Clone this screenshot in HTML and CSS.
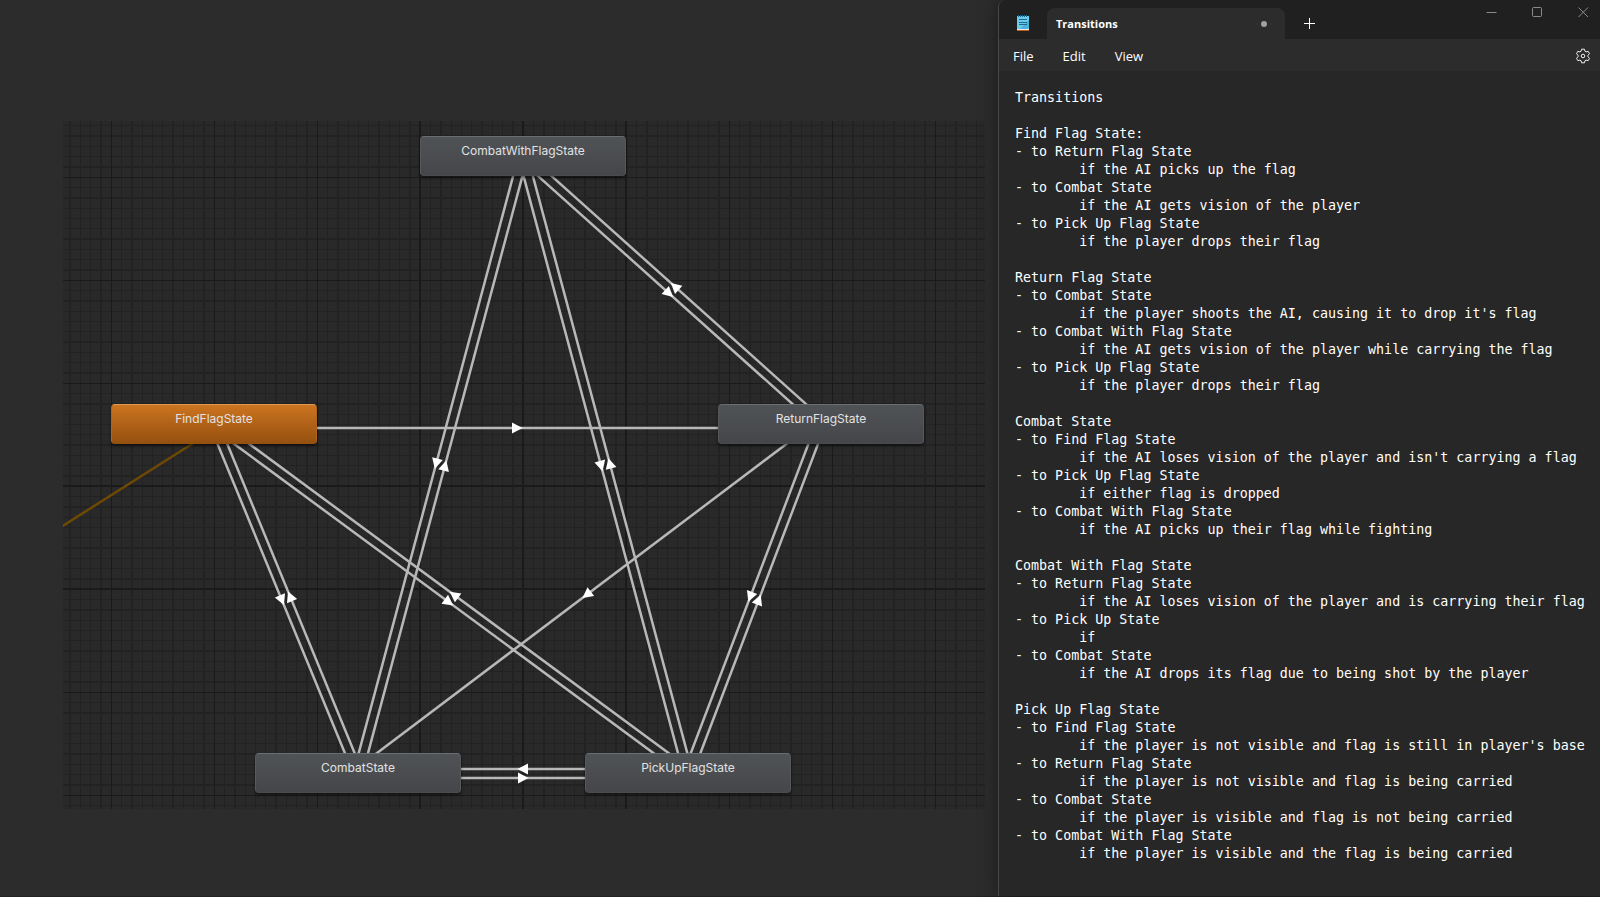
FILE: index.html
```html
<!DOCTYPE html>
<html lang="en">
<head>
<meta charset="utf-8">
<title>Transitions</title>
<link rel="stylesheet" href="styles.css">
</head>
<body>
<div class="desktop">
  <main class="workspace">
    <div class="canvas">
      <svg class="edges" aria-hidden="true">
        <defs>
          <pattern id="grid" x="48" y="56" width="103" height="103" patternUnits="userSpaceOnUse">
            <path class="grid-minor" d="M10 0h1v103h-1zM20 0h2v103h-2zM31 0h1v103h-1zM41 0h1v103h-1zM51 0h1v103h-1zM61 0h2v103h-2zM72 0h1v103h-1zM82 0h1v103h-1zM92 0h2v103h-2z"/>
            <path class="grid-minor" d="M0 10h103v1H0zM0 20h103v2H0zM0 31h103v1H0zM0 41h103v1H0zM0 51h103v1H0zM0 61h103v2H0zM0 72h103v1H0zM0 82h103v1H0zM0 92h103v2H0z"/>
            <path class="grid-major" d="M0 0h1v103H0zM0 0h103v1H0z"/>
          </pattern>
          <g id="ahead"><path d="M-5-5.500L5.500 0L-5 5.500z"/></g>
          <g id="back"><path d="M5-5.500L-5.500 0L5 5.500z"/></g>
        </defs>
        <rect width="100%" height="100%" fill="url(#grid)"/>
        <path class="grid-major" d="M356 0h2v688h-2zM459 0h2v688h-2zM562 0h2v688h-2zM0 364h922v2H0zM0 467h922v2H0z"/>
        <path class="entry" d="M-2 406L151 309"/>
        <!-- Each group runs along the line between two node centres. -->
        <g transform="translate(460 35.5) rotate(104.98)">
          <path class="edge" d="M0 4.5H638M0-4.5H638"/><use href="#ahead" x="319" y="4.5"/><use href="#back" x="319" y="-4.5"/>
        </g>
        <g transform="translate(460 35.5) rotate(75.02)">
          <path class="edge" d="M0 4.5H638M0-4.5H638"/><use href="#ahead" x="319" y="4.5"/><use href="#back" x="319" y="-4.5"/>
        </g>
        <g transform="translate(460 35.5) rotate(41.86)">
          <path class="edge" d="M0 4.5H400M0-4.5H400"/><use href="#ahead" x="200" y="4.5"/><use href="#back" x="200" y="-4.5"/>
        </g>
        <g transform="translate(151 302.5) rotate(67.61)">
          <path class="edge" d="M0 4.5H378M0-4.5H378"/><use href="#ahead" x="189" y="4.5"/><use href="#back" x="189" y="-4.5"/>
        </g>
        <g transform="translate(151 302.5) rotate(36.4)">
          <path class="edge" d="M0 4.5H589M0-4.5H589"/><use href="#ahead" x="295" y="4.5"/><use href="#back" x="295" y="-4.5"/>
        </g>
        <g transform="translate(151 302.5)">
          <path class="edge" d="M0 4.5H607"/><use href="#ahead" x="303" y="4.5"/>
        </g>
        <g transform="translate(758 302.5) rotate(142.95)">
          <path class="edge" d="M0 4.5H580"/><use href="#ahead" x="290" y="4.5"/>
        </g>
        <g transform="translate(758 302.5) rotate(110.83)">
          <path class="edge" d="M0 4.5H374M0-4.5H374"/><use href="#ahead" x="187" y="4.5"/><use href="#back" x="187" y="-4.5"/>
        </g>
        <g transform="translate(295 652.5)">
          <path class="edge" d="M0 4.5H330M0-4.5H330"/><use href="#ahead" x="165" y="4.5"/><use href="#back" x="165" y="-4.5"/>
        </g>
      </svg>
      <div class="node node-combat-flag">CombatWithFlagState</div>
      <div class="node node-find">FindFlagState</div>
      <div class="node node-return">ReturnFlagState</div>
      <div class="node node-combat">CombatState</div>
      <div class="node node-pickup">PickUpFlagState</div>
    </div>
  </main>

  <section class="notepad" aria-label="Notepad">
    <header class="titlebar">
      <svg class="app-icon" viewBox="0 0 14 17" aria-hidden="true">
        <path fill="#c2571a" d="M1 14h12v2H1z"/>
        <path fill="#e8eef0" d="M1 13h12v2H1z"/>
        <path fill="#6accea" d="M1 1h12v12l-1 1H1z"/>
        <path fill="#48b2d8" d="M13 5v8l-1 1H4z"/>
        <path fill="#1b6a92" d="M2 0h1v2H2zM4 0h1v2H4zM6 0h1v2H6zM8 0h1v2H8zM10 0h1v2h-1zM3 4h8v1H3zM3 7h8v1H3zM3 9h8v1H3z"/>
      </svg>
      <div class="tab">
        <span class="tab-title">Transitions</span>
        <span class="unsaved"></span>
      </div>
      <button class="new-tab" aria-label="New tab"><svg class="glyph" viewBox="0 0 11 11"><path d="M5.5 0v11M0 5.5h11"/></svg></button>
      <div class="caption-buttons">
        <button class="caption" aria-label="Minimize"><svg class="glyph" viewBox="0 0 11 11"><path d="M.5 5.5h10"/></svg></button>
        <button class="caption" aria-label="Maximize"><svg class="glyph" viewBox="0 0 11 11"><rect x=".5" y=".5" width="9" height="9" rx="1"/></svg></button>
        <button class="caption" aria-label="Close"><svg class="glyph" viewBox="0 0 11 11"><path d="M.5.5l9.500 9.500M10 .5L.5 10"/></svg></button>
      </div>
    </header>
    <nav class="menubar">
      <button class="menu">File</button>
      <button class="menu">Edit</button>
      <button class="menu">View</button>
      <button class="settings" aria-label="Settings">
        <svg class="gear" viewBox="0 0 16 16"><path d="M6.600 1.200h2.800l.5 2 1.200.7 2-.6 1.400 2.400-1.500 1.500v1.600l1.500 1.500-1.400 2.400-2-.6-1.200.7-.5 2H6.600l-.5-2-1.200-.7-2 .6-1.400-2.400L3 8.800V7.200L1.500 5.700l1.400-2.400 2 .6 1.200-.7z"/><circle cx="8" cy="8" r="1.800"/></svg>
      </button>
    </nav>
    <textarea class="editor" aria-label="Text editor" spellcheck="false">
Transitions

Find Flag State:
- to Return Flag State
	if the AI picks up the flag
- to Combat State
	if the AI gets vision of the player
- to Pick Up Flag State
	if the player drops their flag

Return Flag State
- to Combat State
	if the player shoots the AI, causing it to drop it's flag
- to Combat With Flag State
	if the AI gets vision of the player while carrying the flag
- to Pick Up Flag State
	if the player drops their flag

Combat State
- to Find Flag State
	if the AI loses vision of the player and isn't carrying a flag
- to Pick Up Flag State
	if either flag is dropped
- to Combat With Flag State
	if the AI picks up their flag while fighting

Combat With Flag State
- to Return Flag State
	if the AI loses vision of the player and is carrying their flag
- to Pick Up State
	if
- to Combat State
	if the AI drops its flag due to being shot by the player

Pick Up Flag State
- to Find Flag State
	if the player is not visible and flag is still in player's base
- to Return Flag State
	if the player is not visible and flag is being carried
- to Combat State
	if the player is visible and flag is not being carried
- to Combat With Flag State
	if the player is visible and the flag is being carried</textarea>
  </section>
</div>
</body>
</html>
```
FILE: styles.css
```css
* {
  box-sizing: border-box;
}

body {
  margin: 0;
  background: #2c2c2c;
}

button {
  padding: 0;
  border: 0;
  background: none;
  color: inherit;
  font: inherit;
}

.desktop {
  display: grid;
  grid-template-columns: minmax(0, 1fr) 602px;
  min-height: 100vh;
  border-bottom: 1px solid #222;
}

/* State graph */
.workspace {
  padding: 121px 13px 87px 63px;
}

.canvas {
  position: relative;
  height: 688px;
  background: #292929;
  overflow: hidden;
}

.edges {
  display: block;
  width: 100%;
  height: 100%;
}

.grid-minor {
  fill: #222;
}

.grid-major {
  fill: #1a1a1a;
}

.edge {
  fill: none;
  stroke: #b8b8b8;
  stroke-width: 2.5;
}

.entry {
  fill: none;
  stroke: #6d4904;
  stroke-width: 2.5;
}

.edges use {
  fill: #fff;
}

.node {
  position: absolute;
  width: 206px;
  height: 40px;
  padding-top: 5px;
  border: 1px solid #56585a;
  border-top-color: #6b6e70;
  border-bottom-color: #4a4b4e;
  border-radius: 4px;
  background: linear-gradient(#505356, #454649);
  box-shadow: 0 2px 3px rgba(0, 0, 0, 0.5);
  color: #e2e2e2;
  font: 12px/18px Inter, sans-serif;
  text-align: center;
}

.node-combat-flag { left: 357px; top: 15px; }
.node-return { left: 655px; top: 283px; }
.node-combat { left: 192px; top: 632px; }
.node-pickup { left: 522px; top: 632px; }

.node-find {
  left: 48px;
  top: 283px;
  border-color: #b0651c;
  border-top-color: #e09a58;
  border-bottom-color: #94500f;
  background: linear-gradient(#cc7420, #96500f);
}

/* Notepad window */
.notepad {
  position: relative;
  display: flex;
  flex-direction: column;
  border-left: 1px solid #484848;
  border-top-left-radius: 8px;
  background: #272727;
  box-shadow: 0 0 20px rgba(0, 0, 0, 0.4);
  color: #fff;
  font: 13px/18px "Open Sans", "Noto Sans", sans-serif;
  overflow: hidden;
}

.titlebar {
  display: flex;
  height: 39px;
  background: #202020;
}

.app-icon {
  width: 14px;
  height: 17px;
  margin: 15px 17px 0;
}

.tab {
  display: flex;
  flex: 0 1 238px;
  align-items: center;
  justify-content: space-between;
  height: 31px;
  margin-top: 8px;
  padding: 0 18px 0 9px;
  border-radius: 8px 8px 0 0;
  background: #2c2c2c;
  font-size: 11px;
  font-weight: 700;
}

.unsaved {
  width: 6px;
  height: 6px;
  border-radius: 50%;
  background: #a0a0a0;
}

.glyph {
  display: block;
  width: 11px;
  height: 11px;
  margin: auto;
  fill: none;
  stroke: currentColor;
}

.new-tab {
  width: 32px;
  height: 31px;
  margin: 8px 0 0 8px;
}

.caption-buttons {
  display: flex;
  margin-left: auto;
  margin-right: -6px;
}

.caption {
  width: 46px;
  height: 24px;
  color: #8a8a8a;
}

.menubar {
  display: flex;
  align-items: center;
  gap: 29px;
  height: 32px;
  padding: 1px 9px 0 14px;
  background: #2c2c2c;
}

.settings {
  margin-left: auto;
}

.gear {
  display: block;
  width: 16px;
  height: 16px;
  fill: none;
  stroke: #f0f0f0;
}

.editor {
  flex: 1;
  min-height: 825px;
  padding: 18px 0 20px 16px;
  border: 0;
  outline: 0;
  resize: none;
  overflow: hidden;
  background: #272727;
  color: #fff;
  font: 10pt/18px "DejaVu Sans Mono", monospace;
  tab-size: 8;
  white-space: pre;
}
```
